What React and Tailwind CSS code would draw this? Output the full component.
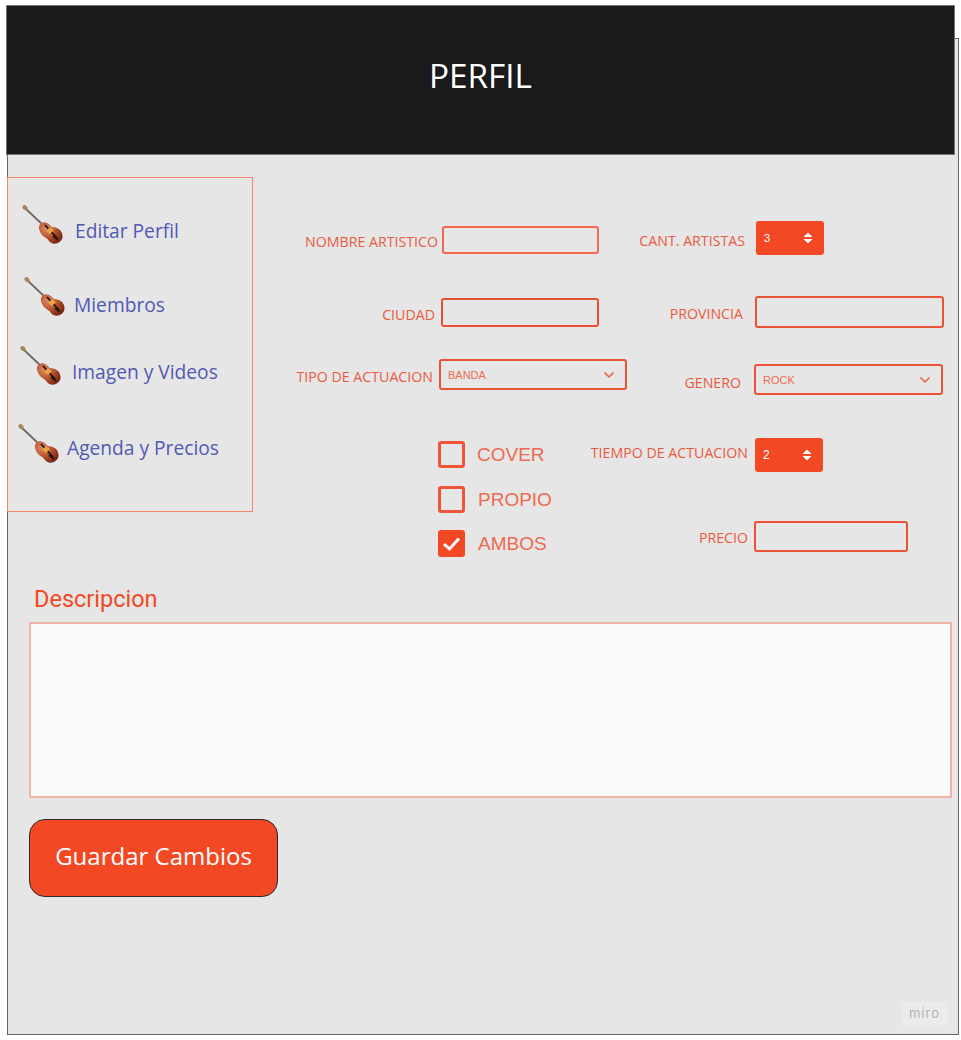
const openSans = "font-['Open_Sans',sans-serif]";

function Guitar() {
  return (
    <svg width="42" height="40" viewBox="0 0 42 40" className="shrink-0 blur-[0.4px]">
      <defs>
        <radialGradient id="guitarBody" cx="0.3" cy="0.3" r="0.85">
          <stop offset="0" stopColor="#d98a68" />
          <stop offset="0.5" stopColor="#b5532c" />
          <stop offset="1" stopColor="#741f0c" />
        </radialGradient>
      </defs>
      <path d="M3 3 L22 21" stroke="#6f6a60" strokeWidth="1.8" />
      <ellipse cx="3" cy="2.6" rx="2.8" ry="2.2" transform="rotate(40 3 2.6)" fill="#a8875a" />
      <path
        d="M17 24 C16 19 21 16 25 18 C28 19 28 21 30 22 C36 22 41 26 40.5 32 C40 37 34 40 29.5 38 C27 37 26.5 34.5 24 33 C20 31 18 28 17 24 Z"
        fill="url(#guitarBody)"
      />
      <path d="M23 20 L35 33" stroke="#1d120c" strokeWidth="1.8" />
      <path d="M24 26 L28 22 L32 25 L28 29 Z" fill="#e9a23f" />
      <path d="M31 31 L36 35" stroke="#2a1710" strokeWidth="2" />
    </svg>
  );
}

function NavItem({ label, itemClass, textClass }) {
  return (
    <div className={`flex h-[40px] items-start ${itemClass}`}>
      <Guitar />
      <span className={`${openSans} text-[19.2px] leading-[28px] whitespace-nowrap text-[#5059b5] ${textClass}`}>
        {label}
      </span>
    </div>
  );
}

function FieldLabel({ children, className }) {
  return (
    <span className={`${openSans} shrink-0 text-right text-[14.2px] leading-[18px] whitespace-nowrap text-[#ea5a40] ${className}`}>
      {children}
    </span>
  );
}

function Stepper({ value, className }) {
  return (
    <div className={`flex h-[34px] w-[68px] items-center justify-between rounded-[3px] bg-[#f24924] pr-[11px] pl-[8px] font-['Liberation_Sans',sans-serif] text-[11px] text-white ${className}`}>
      <span>{value}</span>
      <svg width="10" height="12" viewBox="0 0 10 12">
        <path d="M5 0.5 L9.5 5 H0.5 Z M5 11.5 L0.5 7 H9.5 Z" fill="#fff" />
      </svg>
    </div>
  );
}

function Select({ value, className }) {
  return (
    <div className={`flex h-[31px] items-center justify-between rounded-[3px] border-2 border-[#ec5236] pr-[10px] pl-[7px] font-['Liberation_Sans',sans-serif] text-[11px] text-[#ee6a50] ${className}`}>
      <span className="pt-[1px]">{value}</span>
      <svg width="12" height="8" viewBox="0 0 12 8" fill="none" stroke="#ec5a3f" strokeWidth="1.5">
        <path d="M1.5 1.5 L6 6 L10.5 1.5" />
      </svg>
    </div>
  );
}

function CheckOption({ label, checked, className, labelClass }) {
  return (
    <div className={`flex items-center ${className}`}>
      <div
        className={`flex h-[27px] w-[27px] items-center justify-center rounded-[3px] border-[3px] border-[#f0553a] ${checked ? "border-[#f24924] bg-[#f24924]" : ""}`}
      >
        {checked && (
          <svg width="19" height="16" viewBox="0 0 19 16" fill="none" stroke="#fff" strokeWidth="3">
            <path d="M2 8 L7.5 13 L17 2.5" />
          </svg>
        )}
      </div>
      <span className={`font-['Liberation_Sans',sans-serif] text-[19px] leading-[27px] whitespace-nowrap text-[#ee6a50] ${labelClass}`}>
        {label}
      </span>
    </div>
  );
}

export default function App() {
  return (
    <div className="min-h-[1040px] overflow-hidden bg-white pt-[38px] pl-[7px]">
      <div className="relative h-[997px] w-[952px] border border-[#666] bg-[#e6e6e6]">
        {/* Header */}
        <div className={`-mt-[34px] -ml-[2px] flex h-[150px] w-[949px] items-center justify-center border border-[#777] bg-[#1a1a1a] pb-[8px] ${openSans} text-[33.3px] text-white`}>
          PERFIL
        </div>

        <div className="mt-[22px] flex items-start">
          {/* Sidebar */}
          <div className="-ml-[1px] h-[335px] w-[246px] shrink-0 border border-[#f8846a]">
            <NavItem label="Editar Perfil" itemClass="mt-[27px] ml-[14px]" textClass="mt-[12px] ml-[11px]" />
            <NavItem label="Miembros" itemClass="mt-[32px] ml-[16px]" textClass="mt-[14px] ml-[8px]" />
            <NavItem label="Imagen y Videos" itemClass="mt-[29px] ml-[12px]" textClass="mt-[12px] ml-[10px]" />
            <NavItem label="Agenda y Precios" itemClass="mt-[38px] ml-[10px]" textClass="mt-[10px] ml-[7px]" />
          </div>

          {/* Form */}
          <div className="ml-[1px] flex-1">
            <div className="mt-[44px] flex h-[34px] items-start">
              <div className="flex w-[376px] items-start">
                <FieldLabel className="mt-[12px] w-[184px]">NOMBRE ARTISTICO</FieldLabel>
                <div className="mt-[5px] ml-[4px] h-[28px] w-[157px] rounded-[3px] border-2 border-[#f4694d]" />
              </div>
              <FieldLabel className="mt-[11px] w-[115px]">CANT. ARTISTAS</FieldLabel>
              <Stepper value="3" className="ml-[11px]" />
            </div>

            <div className="mt-[41px] flex h-[32px] items-start">
              <div className="flex w-[376px] items-start">
                <FieldLabel className="mt-[10px] w-[181px]">CIUDAD</FieldLabel>
                <div className="mt-[2px] ml-[6px] h-[29px] w-[158px] rounded-[3px] border-2 border-[#e84f33]" />
              </div>
              <FieldLabel className="mt-[9px] w-[113px]">PROVINCIA</FieldLabel>
              <div className="ml-[12px] h-[32px] w-[189px] rounded-[3px] border-2 border-[#ec5236]" />
            </div>

            <div className="mt-[31px] flex h-[36px] items-start">
              <div className="flex w-[376px] items-start">
                <FieldLabel className="mt-[9px] w-[179px]">TIPO DE ACTUACION</FieldLabel>
                <Select value="BANDA" className="ml-[6px] w-[188px]" />
              </div>
              <FieldLabel className="mt-[15px] w-[111px]">GENERO</FieldLabel>
              <Select value="ROCK" className="mt-[5px] ml-[13px] w-[189px]" />
            </div>

            <div className="mt-[43px] flex h-[34px] items-start">
              <div className="w-[336px] pt-[3px]">
                <CheckOption label="COVER" className="ml-[184px]" labelClass="ml-[12px]" />
              </div>
              <FieldLabel className="mt-[6px] w-[158px]">TIEMPO DE ACTUACION</FieldLabel>
              <Stepper value="2" className="ml-[7px] text-[12px]" />
            </div>

            <CheckOption label="PROPIO" className="mt-[14px] ml-[184px]" labelClass="ml-[13px]" />

            <div className="mt-[8px] flex items-start">
              <div className="w-[336px] pt-[9px]">
                <CheckOption label="AMBOS" checked className="ml-[184px]" labelClass="ml-[13px]" />
              </div>
              <FieldLabel className="mt-[8px] w-[158px]">PRECIO</FieldLabel>
              <div className="ml-[6px] h-[31px] w-[154px] rounded-[3px] border-2 border-[#ec5236]" />
            </div>
          </div>
        </div>

        {/* Descripcion */}
        <div className="mt-[28px] ml-[26px] font-['Roboto',sans-serif] text-[23.5px] leading-[28px] text-[#f24924]">
          Descripcion
        </div>
        <div className="mt-[9px] ml-[21px] h-[176px] w-[923px] border-2 border-[#f1b3a3] bg-[#fafafa]" />

        <button className={`mt-[21px] ml-[21px] h-[78px] w-[249px] rounded-[16px] border border-[#2a2a2a] bg-[#f24924] pb-[5px] ${openSans} text-[24px] text-white`}>
          Guardar Cambios
        </button>

        <div className="absolute right-[10px] bottom-[9px] flex h-[23px] w-[47px] items-center justify-center bg-[#ebebeb] font-['Inter',sans-serif] text-[13px] tracking-[1px] text-[#b4b4b4]">
          miro
        </div>
      </div>
    </div>
  );
}
